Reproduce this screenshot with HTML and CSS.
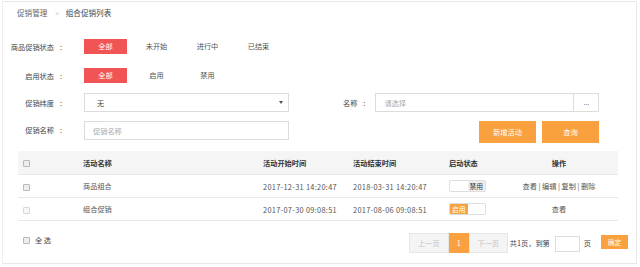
FILE: index.html
```html
<!DOCTYPE html>
<html lang="zh-CN">
<head>
<meta charset="utf-8">
<title>组合促销列表</title>
<link rel="stylesheet" href="styles.css">
</head>
<body>
<div class="panel">
  <div class="crumb"><span>促销管理</span><span class="sep">&gt;</span><span class="cur">组合促销列表</span></div>

  <div class="row r1">
    <span class="label">商品促销状态</span><span class="colon">:</span>
    <span class="opt on">全部</span><span class="opt">未开始</span><span class="opt">进行中</span><span class="opt">已结束</span>
  </div>
  <div class="row r2">
    <span class="label">启用状态</span><span class="colon">:</span>
    <span class="opt on">全部</span><span class="opt">启用</span><span class="opt">禁用</span>
  </div>
  <div class="row r3">
    <span class="label">促销纬度</span><span class="colon">:</span>
    <div class="select"><span>无</span><span class="arrow"></span></div>
    <span class="label2">名称</span><span class="colon2">:</span>
    <div class="pick"><span class="ph">请选择</span></div><span class="dots">...</span>
  </div>
  <div class="row r4">
    <span class="label">促销名称</span><span class="colon">:</span>
    <div class="input"><span class="ph">促销名称</span></div>
    <span class="btn add">新增活动</span><span class="btn query">查询</span>
  </div>

  <table class="grid">
    <colgroup><col class="c1"><col class="c2"><col class="c3"><col class="c4"><col class="c5"><col class="c6"></colgroup>
    <thead>
      <tr><th class="ck"><span class="box"></span></th><th>活动名称</th><th>活动开始时间</th><th>活动结束时间</th><th>启动状态</th><th class="ops">操作</th></tr>
    </thead>
    <tbody>
      <tr><td class="ck"><span class="box"></span></td><td>商品组合</td><td class="num">2017-12-31 14:20:47</td><td class="num">2018-03-31 14:20:47</td>
        <td><span class="toggle off"><span class="half a"></span><span class="half b">禁用</span></span></td>
        <td class="ops">查看 | 编辑 | 复制 | 删除</td></tr>
      <tr><td class="ck"><span class="box dis"></span></td><td>组合促销</td><td class="num">2017-07-30 09:08:51</td><td class="num">2017-08-06 09:08:51</td>
        <td><span class="toggle onn"><span class="half a">启用</span><span class="half b"></span></span></td>
        <td class="ops">查看</td></tr>
    </tbody>
  </table>

  <div class="foot">
    <div class="all"><span class="box"></span><span class="alltxt">全 选</span></div>
    <div class="pager">
      <span class="pg prev">上一页</span><span class="pg cur">1</span><span class="pg next">下一页</span>
      <span class="total">共1页，到第</span><span class="goto"></span><span class="page">页</span><span class="ok">确定</span>
    </div>
  </div>
</div>
</body>
</html>
```
FILE: styles.css
```css
html, body { margin: 0; padding: 0; background: #fff; }
body {
  font-family: "Noto Sans CJK SC", "Noto Sans", sans-serif;
  font-size: 7.2px;
  color: #555;
  width: 640px;
  height: 267px;
  overflow: hidden;
}
.panel {
  margin: 1px 3px 0 2px;
  height: 263px;
  box-sizing: border-box;
  border: 1px solid #e8e8e8;
  border-left-color: #eeeeee;
}
.crumb {
  padding: 4px 0 0 14px;
  line-height: 14px;
  height: 14px;
  font-size: 7.6px;
  color: #666;
}
.crumb .sep { margin: 0 7px 0 8px; color: #bbb; font-size: 6px; }
.crumb .cur { color: #444; }

.row { display: flex; align-items: center; }
.r1 { margin-top: 19px; height: 15px; }
.r2 { margin-top: 14px; height: 15px; }
.r3 { margin-top: 10px; height: 19px; }
.r4 { margin-top: 9px; height: 22px; align-items: flex-start; }
.label { width: 51px; text-align: right; color: #444; }
.colon { width: 24px; padding-left: 6px; color: #444; }
.r4 .label, .r4 .colon { line-height: 19px; }

.opt {
  width: 43px; height: 15px; line-height: 15px;
  text-align: center; margin-right: 8px; color: #555;
}
.opt.on { background: #f05454; color: #fff; }

.select, .input, .pick {
  box-sizing: border-box; border: 1px solid #dcdcdc; height: 19px;
  display: flex; align-items: center;
}
.select { width: 205px; padding: 0 5px 0 12px; justify-content: space-between; color: #444; }
.arrow { width: 0; height: 0; border-left: 2px solid transparent; border-right: 2px solid transparent; border-top: 3px solid #555; }
.input { width: 205px; padding-left: 8px; }
.ph { color: #aaa; }
.label2 { margin-left: 54px; color: #444; }
.colon2 { width: 12px; padding-left: 6px; color: #444; }
.pick { width: 199px; padding-left: 8px; }
.dots {
  box-sizing: border-box; width: 25px; height: 19px; line-height: 16px;
  border: 1px solid #dcdcdc; border-left: none; text-align: center; color: #777; font-size: 7px;
}
.btn {
  height: 22px; line-height: 22px; background: #f8a13e; color: #fff; text-align: center; width: 57px;
}
.add { margin-left: 190px; }
.query { margin-left: 6px; }

.grid {
  margin: 8px 0 0 15px;
  width: 600px;
  border-collapse: collapse;
  table-layout: fixed;
}
.c1 { width: 65px; } .c2 { width: 180px; } .c3 { width: 90px; } .c4 { width: 96px; } .c5 { width: 51px; } .c6 { width: 118px; }
.grid th, .grid td {
  padding: 0; height: 22px; text-align: left; border-bottom: 1px solid #e9e9e9; white-space: nowrap;
}
.grid th { background: #f5f5f5; color: #333; font-weight: bold; height: 23px; }
.grid td { color: #555; }
.grid .ck { padding-left: 5px; }
.grid .ops { text-align: center; }
.num { letter-spacing: 0.3px; font-size: 7.4px; }
.box {
  display: inline-block; width: 5px; height: 5px; border: 1px solid #b8b8b8; border-radius: 1px;
  background: #eeeeee; vertical-align: middle;
}
.box.dis { border-color: #d8d8d8; background: #f6f6f6; }

.toggle {
  display: inline-flex; width: 37px; height: 12px; box-sizing: border-box;
  border: 1px solid #dedede; border-radius: 2px; vertical-align: middle; overflow: hidden;
}
.half { flex: 1; line-height: 10px; text-align: center; font-size: 6.8px; }
.off .b { background: #eeeeee; color: #333; }
.onn .a { background: #f8a13e; color: #fff; }

.foot { display: flex; align-items: flex-start; margin-top: 12px; padding: 0 8px 0 20px; }
.all { display: flex; align-items: center; margin-top: 1px; line-height: 12px; }
.alltxt { margin-left: 5px; color: #444; }
.pager { margin-left: auto; display: flex; align-items: flex-start; }
.pg {
  box-sizing: border-box; height: 20px; line-height: 18px; text-align: center;
  border: 1px solid #e6e6e6; background: #f4f4f4; color: #c4c4c4;
}
.prev { width: 40px; }
.pg.cur { width: 20px; background: #f8a13e; border-color: #f8a13e; color: #fff; }
.next { width: 39px; }
.total { margin-left: 2px; line-height: 20px; color: #444; }
.goto { margin: 3px 0 0 5px; width: 25px; height: 16px; box-sizing: border-box; border: 1px solid #dedede; }
.page { margin-left: 4px; line-height: 20px; color: #444; }
.ok { margin: 2px 0 0 10px; width: 27px; height: 14px; line-height: 14px; text-align: center; background: #f8a13e; color: #fff; font-size: 6.8px; }
```
